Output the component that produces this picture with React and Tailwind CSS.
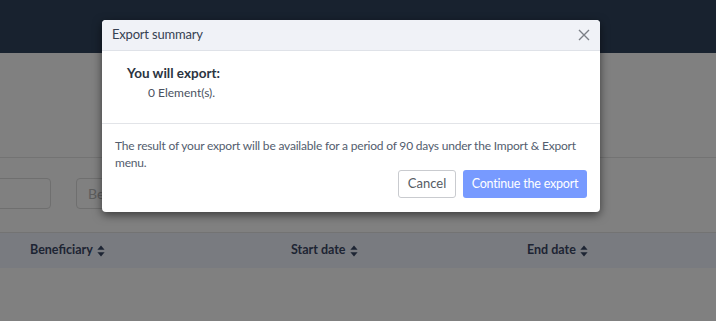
import React from "react";

function SortIcon() {
  return (
    <svg width="8" height="12" viewBox="0 0 8 12" className="ml-[4px] inline-block">
      <path d="M4 0.5 L7.6 4.8 H0.4 Z" fill="#1d2433" />
      <path d="M4 11.5 L7.6 7.2 H0.4 Z" fill="#1d2433" />
    </svg>
  );
}

export default function App() {
  return (
    <div
      className="relative w-[716px] h-[321px] overflow-hidden bg-[#808080]"
      style={{ fontFamily: "Lato, 'Open Sans', sans-serif" }}
    >
      <div className="h-[53px] bg-[#18222f]" />
      <div className="h-[104px]" />
      <div className="border-t border-[#737373] h-[75px] flex items-start pt-[20px]">
        <div className="w-[61px] h-[31px] border border-[#6f6f6f] rounded-[4px] -ml-[10px]" />
        <div className="ml-[25px] w-[200px] h-[31px] border border-[#6f6f6f] rounded-[4px] flex items-center pl-[11px] text-[14px] text-[#5d5d5d]">
          Beneficiary
        </div>
      </div>
      <div className="border-t border-[#737373] h-[36px] bg-[#797b80] flex items-center text-[12.5px] font-bold text-[#1d2433]">
        <div className="pl-[30px] w-[291px] flex items-center">Beneficiary<SortIcon /></div>
        <div className="w-[236px] flex items-center">Start date<SortIcon /></div>
        <div className="flex items-center">End date<SortIcon /></div>
      </div>

      <div className="absolute left-[102px] top-[20px] w-[498px] h-[192px] bg-white rounded-[4px] overflow-hidden shadow-[0_3px_10px_rgba(0,0,0,0.55)] flex flex-col">
        <div className="h-[31px] bg-[#f0f2f7] border-b border-[#dfe2e8] flex items-center justify-between pl-[10px] pr-[10px]">
          <span className="text-[13px] tracking-[-0.2px] text-[#364152]">Export summary</span>
          <svg width="12" height="12" viewBox="0 0 12 12">
            <path d="M1 1 L11 11 M11 1 L1 11" stroke="#7b7f86" strokeWidth="1.4" />
          </svg>
        </div>
        <div className="h-[73px] border-b border-[#e2e4e8] pl-[25px] pt-[13px]">
          <div className="text-[13.5px] font-bold text-[#2b3441] leading-[18px]">You will export:</div>
          <div className="text-[12px] text-[#4a5261] pl-[21px] leading-[18px] mt-[2px]">0 Element(s).</div>
        </div>
        <div className="flex-1 px-[13px] pt-[13px]">
          <p className="text-[12px] tracking-[-0.2px] leading-[17px] text-[#535d6e]">
            The result of your export will be available for a period of 90 days under the Import &amp; Export menu.
          </p>
          <div className="flex justify-end gap-[7px] mt-[-1px]">
            <button className="h-[28px] w-[58px] border border-[#c9cbcf] rounded-[3px] text-[13px] text-[#555b63] bg-white">
              Cancel
            </button>
            <button className="h-[28px] w-[124px] rounded-[3px] text-[12.5px] tracking-[-0.2px] text-white bg-[#779aff]">
              Continue the export
            </button>
          </div>
        </div>
      </div>
    </div>
  );
}
